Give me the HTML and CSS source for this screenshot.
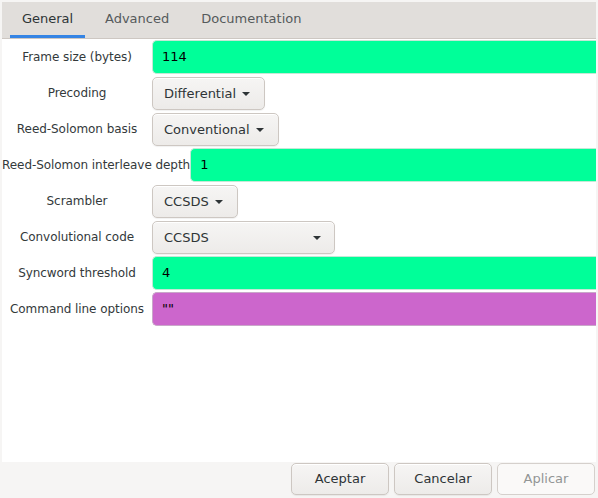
FILE: index.html
```html
<!DOCTYPE html>
<html>
<head>
<meta charset="utf-8">
<link rel="stylesheet" href="styles.css">
</head>
<body>
<div class="dialog">
  <div class="notebook">
    <div class="tabs">
      <div class="tab active">General</div>
      <div class="tab second">Advanced</div>
      <div class="tab third">Documentation</div>
    </div>
    <div class="page">
      <div class="row"><div class="label">Frame size (bytes)</div><div class="entry int">114</div></div>
      <div class="row"><div class="label">Precoding</div><div class="combo">Differential<span class="arrow"></span></div></div>
      <div class="row"><div class="label">Reed-Solomon basis</div><div class="combo">Conventional<span class="arrow"></span></div></div>
      <div class="row"><div class="label">Reed-Solomon interleave depth</div><div class="entry int">1</div></div>
      <div class="row"><div class="label">Scrambler</div><div class="combo">CCSDS<span class="arrow"></span></div></div>
      <div class="row"><div class="label">Convolutional code</div><div class="combo wide">CCSDS<span class="arrow"></span></div></div>
      <div class="row"><div class="label">Syncword threshold</div><div class="entry int">4</div></div>
      <div class="row"><div class="label">Command line options</div><div class="entry raw">""</div></div>
    </div>
  </div>
  <div class="actions">
    <div class="btn">Aceptar</div>
    <div class="btn">Cancelar</div>
    <div class="btn disabled">Aplicar</div>
  </div>
</div>
</body>
</html>
```
FILE: styles.css
```css
html, body {
  margin: 0;
  padding: 0;
  background: #f6f5f4;
  font-family: "DejaVu Sans", "Liberation Sans", sans-serif;
  font-size: 13px;
  color: #2e3436;
}
.dialog {
  width: 598px;
  height: 498px;
  box-sizing: border-box;
  padding: 2px 2px 0 2px;
  display: flex;
  flex-direction: column;
}
.notebook {
  width: 594px;
  height: 460px;
  display: flex;
  flex-direction: column;
}
.tabs {
  height: 36px;
  background: #e1dedb;
  border-bottom: 1px solid #cdc7c2;
  display: flex;
  padding-left: 8px;
}
.tab {
  height: 36px;
  line-height: 34px;
  color: #555a5c;
  box-sizing: border-box;
}
.tab.active {
  color: #2e3436;
  box-shadow: inset 0 -3px 0 #3584e4;
  width: 75px;
  text-align: center;
}
.tab.second { margin-left: 20px; }
.tab.third { margin-left: 32px; }
.page {
  flex: 1;
  background: #ffffff;
  padding-top: 1px;
  display: flex;
  flex-direction: column;
  gap: 2px;
}
.row {
  display: flex;
  align-items: center;
  height: 34px;
}
.label {
  min-width: 150px;
  text-align: center;
  white-space: nowrap;
  flex: none;
  font-size: 12px;
  letter-spacing: -0.06px;
  color: #33393b;
}
.entry {
  flex: 1;
  height: 34px;
  box-sizing: border-box;
  border: 1px solid #cdc7c2;
  border-right: none;
  border-radius: 5px 0 0 5px;
  padding-left: 9px;
  line-height: 32px;
  color: #000;
}
.entry.int { background: #00ff99; border-color: #c4e8d6; }
.entry.raw { background: #cc66cc; border-color: #c9a8c9; }
.combo {
  height: 33px;
  box-sizing: border-box;
  border: 1px solid #cdc7c2;
  border-radius: 5px;
  background: linear-gradient(#f6f5f4, #edebe9);
  padding: 0 14px 0 11px;
  display: flex;
  align-items: center;
  gap: 6px;
  box-shadow: inset 0 1px #ffffff, 0 1px 1px rgba(0,0,0,0.06);
}
.combo.wide {
  width: 183px;
  justify-content: space-between;
  padding-right: 13px;
}
.arrow {
  width: 0;
  height: 0;
  border-left: 4px solid transparent;
  border-right: 4px solid transparent;
  border-top: 4px solid #2e3436;
  margin-top: 1px;
}
.actions {
  display: flex;
  justify-content: flex-end;
  gap: 5px;
  padding-top: 1px;
  padding-right: 1px;
}
.btn {
  width: 98px;
  height: 32px;
  box-sizing: border-box;
  border: 1px solid #cdc7c2;
  border-radius: 5px;
  background: linear-gradient(#f6f5f4, #edebe9);
  text-align: center;
  line-height: 30px;
  box-shadow: inset 0 1px #ffffff, 0 1px 1px rgba(0,0,0,0.06);
}
.btn.disabled {
  background: #faf9f8;
  border-color: #d5d0cc;
  color: #929595;
  box-shadow: none;
}
```
